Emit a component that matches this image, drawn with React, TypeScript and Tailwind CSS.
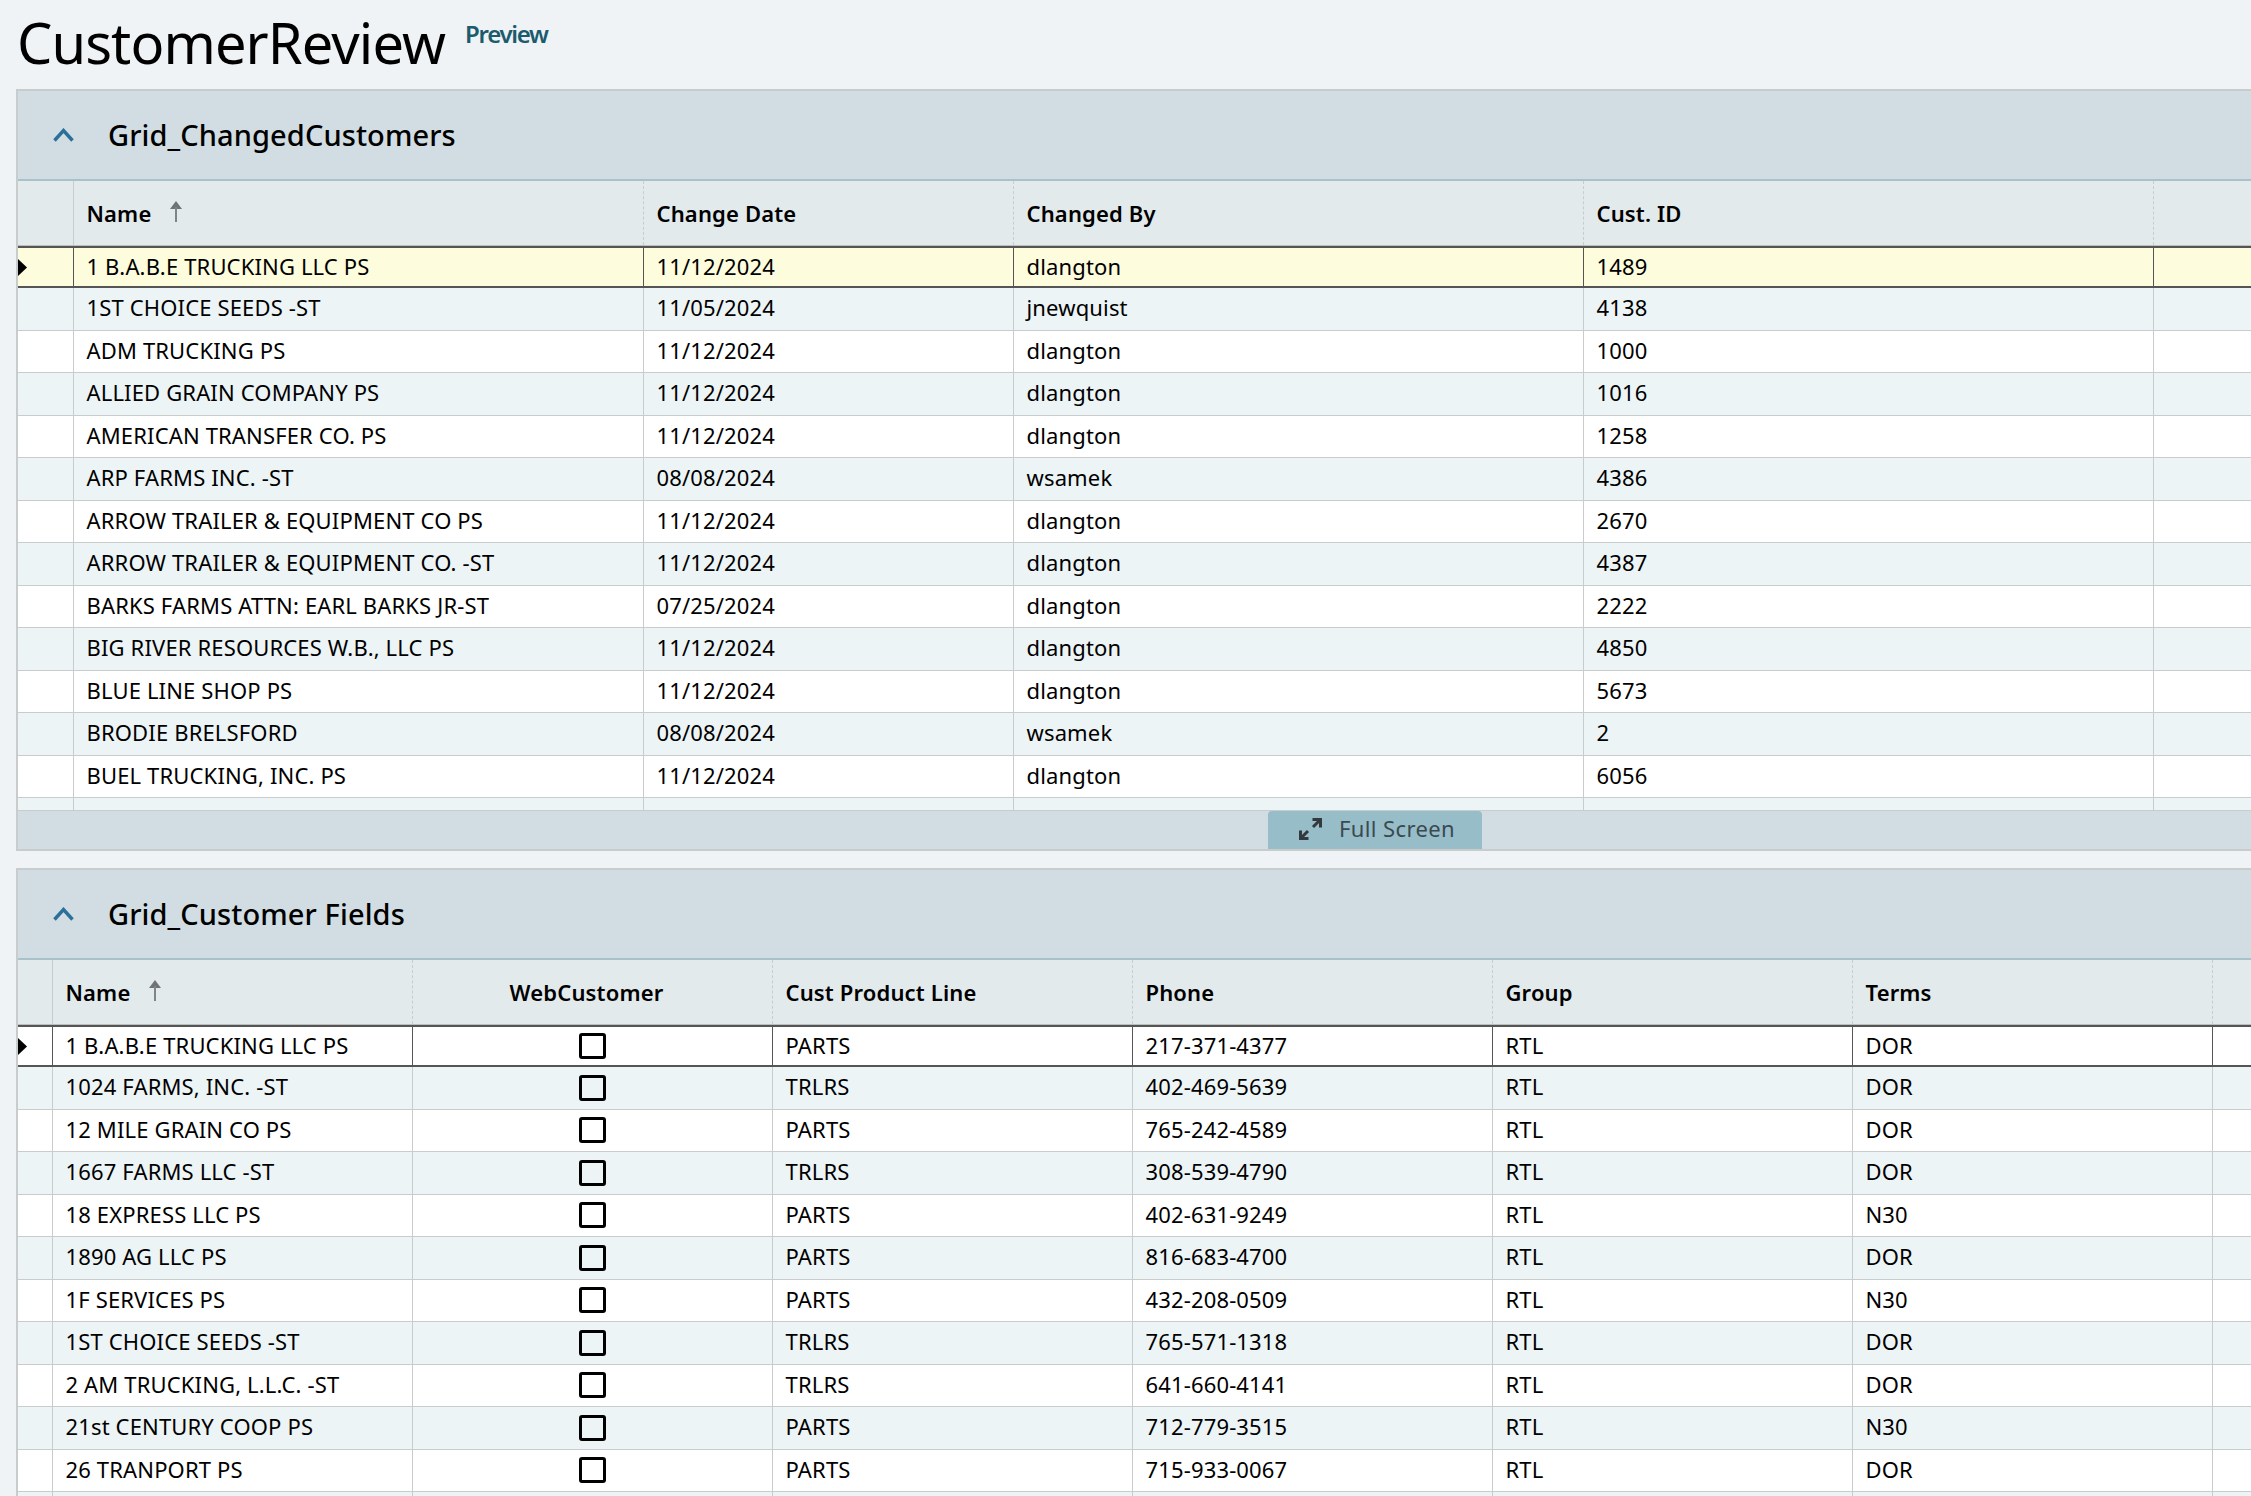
import React from "react";

type Row = string[];

const changedRows: Row[] = [
  ["1 B.A.B.E TRUCKING LLC PS", "11/12/2024", "dlangton", "1489"],
  ["1ST CHOICE SEEDS -ST", "11/05/2024", "jnewquist", "4138"],
  ["ADM TRUCKING PS", "11/12/2024", "dlangton", "1000"],
  ["ALLIED GRAIN COMPANY PS", "11/12/2024", "dlangton", "1016"],
  ["AMERICAN TRANSFER CO. PS", "11/12/2024", "dlangton", "1258"],
  ["ARP FARMS INC. -ST", "08/08/2024", "wsamek", "4386"],
  ["ARROW TRAILER & EQUIPMENT CO PS", "11/12/2024", "dlangton", "2670"],
  ["ARROW TRAILER & EQUIPMENT CO. -ST", "11/12/2024", "dlangton", "4387"],
  ["BARKS FARMS ATTN: EARL BARKS JR-ST", "07/25/2024", "dlangton", "2222"],
  ["BIG RIVER RESOURCES W.B., LLC PS", "11/12/2024", "dlangton", "4850"],
  ["BLUE LINE SHOP PS", "11/12/2024", "dlangton", "5673"],
  ["BRODIE BRELSFORD", "08/08/2024", "wsamek", "2"],
  ["BUEL TRUCKING, INC. PS", "11/12/2024", "dlangton", "6056"],
  ["", "11/12/2024", "dlangton", ""],
];

const fieldRows: Row[] = [
  ["1 B.A.B.E TRUCKING LLC PS", "PARTS", "217-371-4377", "RTL", "DOR"],
  ["1024 FARMS, INC. -ST", "TRLRS", "402-469-5639", "RTL", "DOR"],
  ["12 MILE GRAIN CO PS", "PARTS", "765-242-4589", "RTL", "DOR"],
  ["1667 FARMS LLC -ST", "TRLRS", "308-539-4790", "RTL", "DOR"],
  ["18 EXPRESS LLC PS", "PARTS", "402-631-9249", "RTL", "N30"],
  ["1890 AG LLC PS", "PARTS", "816-683-4700", "RTL", "DOR"],
  ["1F SERVICES PS", "PARTS", "432-208-0509", "RTL", "N30"],
  ["1ST CHOICE SEEDS -ST", "TRLRS", "765-571-1318", "RTL", "DOR"],
  ["2 AM TRUCKING, L.L.C. -ST", "TRLRS", "641-660-4141", "RTL", "DOR"],
  ["21st CENTURY COOP PS", "PARTS", "712-779-3515", "RTL", "N30"],
  ["26 TRANPORT PS", "PARTS", "715-933-0067", "RTL", "DOR"],
  ["", "", "", "", ""],
];

function SortArrow() {
  return (
    <svg width="14" height="21" viewBox="0 0 14 21" className="ml-[18px] mb-[4px] shrink-0">
      <path d="M7 0 L13 8 H1 Z" fill="#6f7375" />
      <path d="M7 6 V21" stroke="#7f8486" strokeWidth="2" />
    </svg>
  );
}

function Chevron() {
  return (
    <svg width="21" height="14" viewBox="0 0 21 14" className="shrink-0">
      <path d="M1.5 12.5 L10.5 2.5 L19.5 12.5" fill="none" stroke="#2a7099" strokeWidth="3.4" />
    </svg>
  );
}

function RowMarker() {
  return (
    <svg width="9" height="17" viewBox="0 0 9 17" className="shrink-0">
      <path d="M0 0 L9 8.5 L0 17 Z" fill="#000" />
    </svg>
  );
}

function ExpandIcon() {
  return (
    <svg width="23" height="22" viewBox="0 0 23 22" className="shrink-0">
      <path
        d="M13.5 1.5 H21.5 V9.5 M21 2 L14 9 M1.5 12.5 V20.5 H9.5 M2 20 L9 13"
        fill="none"
        stroke="#33393c"
        strokeWidth="3"
      />
    </svg>
  );
}

function Section({ title }: { title: string }) {
  return (
    <div className="flex items-center h-[90px] pl-[35px] bg-[#d1dde2] border-b-2 border-[#a8c2cc]">
      <Chevron />
      <span className="ml-[34px] text-[29px] font-[550] tracking-[0.1px] text-black">{title}</span>
    </div>
  );
}

function GridOne() {
  const cols = ["w-[570px]", "w-[370px]", "w-[570px]", "w-[570px]"];
  const heads = ["Name", "Change Date", "Changed By", "Cust. ID"];
  return (
    <div className="h-[629px] overflow-hidden">
      <div className="flex h-[65px] bg-[#e2eaec] border-b border-[#b9bebf] font-semibold">
        <div className="w-[56px] shrink-0 border-r border-[#c8cccd]" />
        {heads.map((h, i) => (
          <div key={h} className={`${cols[i]} shrink-0 flex items-center px-[12.5px] border-r border-dashed border-[#c8cccd]`}>
            {h}
            {i === 0 && <SortArrow />}
          </div>
        ))}
        <div className="flex-1" />
      </div>
      {changedRows.map((r, idx) => {
        const sel = idx === 0;
        const line = sel ? "border-[#555]" : "border-[#c8cccd]";
        const bg = sel ? "bg-[#fdfcdd]" : idx % 2 === 1 ? "bg-[#ecf4f6]" : "bg-white";
        return (
          <div key={idx} className={`flex border-b ${sel ? "h-[42px] border-t-2 border-b-2" : "h-[42.5px]"} ${line} ${bg}`}>
            <div className={`w-[56px] shrink-0 flex items-center border-r ${line}`}>{sel && <RowMarker />}</div>
            {r.map((c, i) => (
              <div key={i} className={`${cols[i]} shrink-0 flex items-center px-[12.5px] pb-[2px] whitespace-nowrap border-r ${line}`}>
                {c}
              </div>
            ))}
            <div className="flex-1" />
          </div>
        );
      })}
    </div>
  );
}

function GridTwo() {
  const heads = ["Cust Product Line", "Phone", "Group", "Terms"];
  return (
    <div>
      <div className="flex h-[65px] bg-[#e2eaec] border-b border-[#b9bebf] font-semibold">
        <div className="w-[35px] shrink-0 border-r border-[#c8cccd]" />
        <div className="w-[360px] shrink-0 flex items-center px-[12.5px] border-r border-dashed border-[#c8cccd]">
          Name
          <SortArrow />
        </div>
        <div className="w-[360px] shrink-0 flex items-center justify-center pr-[12px] border-r border-dashed border-[#c8cccd]">
          WebCustomer
        </div>
        {heads.map((h) => (
          <div key={h} className="w-[360px] shrink-0 flex items-center px-[12.5px] border-r border-dashed border-[#c8cccd]">
            {h}
          </div>
        ))}
        <div className="flex-1" />
      </div>
      {fieldRows.map((r, idx) => {
        const sel = idx === 0;
        const line = sel ? "border-[#555]" : "border-[#c8cccd]";
        const bg = idx % 2 === 1 ? "bg-[#ecf4f6]" : "bg-white";
        return (
          <div key={idx} className={`flex border-b ${sel ? "h-[42px] border-t-2 border-b-2" : "h-[42.5px]"} ${line} ${bg}`}>
            <div className={`w-[35px] shrink-0 flex items-center border-r ${line}`}>{sel && <RowMarker />}</div>
            <div className={`w-[360px] shrink-0 flex items-center px-[12.5px] pb-[2px] whitespace-nowrap border-r ${line}`}>{r[0]}</div>
            <div className={`w-[360px] shrink-0 flex items-center justify-center border-r ${line}`}>
              {r[0] && <div className="w-[27px] h-[26px] border-[3px] border-black rounded-[3px]" />}
            </div>
            {r.slice(1).map((c, i) => (
              <div key={i} className={`w-[360px] shrink-0 flex items-center px-[12.5px] pb-[2px] whitespace-nowrap border-r ${line}`}>
                {c}
              </div>
            ))}
            <div className="flex-1" />
          </div>
        );
      })}
    </div>
  );
}

export default function App() {
  return (
    <div className="h-screen overflow-hidden bg-[#eff3f6] text-black text-[22px] font-['Noto_Sans',sans-serif] tracking-[0.15px]">
      <div className="flex items-start h-[89px] pl-[17px]">
        <h1 className="text-[56px] leading-[84px] tracking-[-0.9px]">CustomerReview</h1>
        <span className="ml-[20px] mt-[16px] text-[24px] font-semibold tracking-[-1.3px] text-[#1c5a6e]">Preview</span>
      </div>

      <div className="ml-4 w-[2716px] border-t-2 border-l-2 border-b-2 border-[#c8cccd] bg-[#d1dde2]">
        <Section title="Grid_ChangedCustomers" />
        <GridOne />
        <div className="flex justify-center h-[39px] border-t border-[#c8cccd]">
          <button className="flex items-center justify-center gap-[17px] w-[214px] h-full pl-[4px] pb-[3px] bg-[#97bdc9] rounded-t-[4px] text-[#3b4a50] tracking-[0.4px]">
            <ExpandIcon />
            Full Screen
          </button>
        </div>
      </div>

      <div className="ml-4 mt-[17px] w-[2716px] border-t-2 border-l-2 border-[#c8cccd]">
        <Section title="Grid_Customer Fields" />
        <GridTwo />
      </div>
    </div>
  );
}
